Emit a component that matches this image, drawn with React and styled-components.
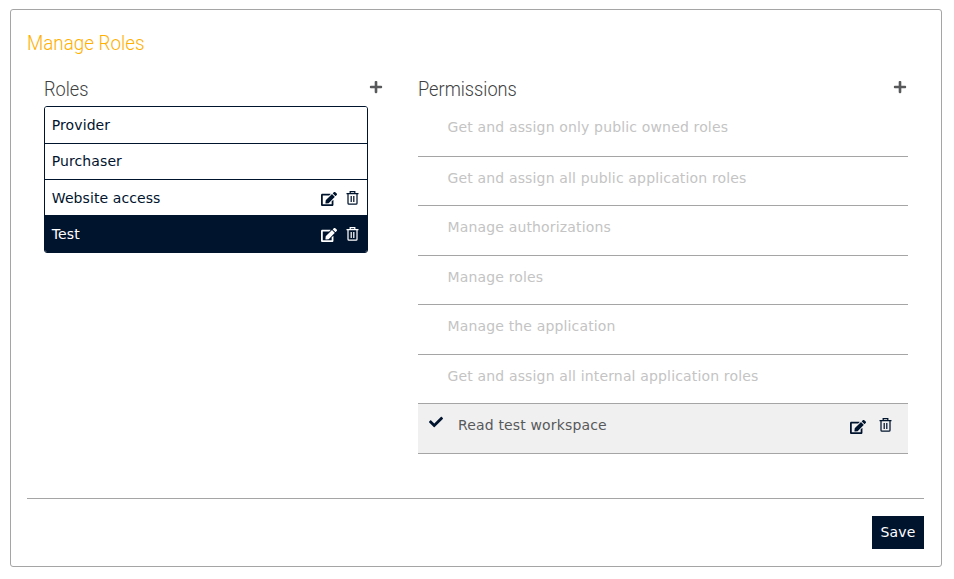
import React from "react";
import styled, { createGlobalStyle } from "styled-components";
import { FaEdit, FaPlus, FaCheck } from "react-icons/fa";

const Global = createGlobalStyle`
  * { box-sizing: border-box; }
  body { margin: 0; background: #fff; font-family: Verdana, "DejaVu Sans", sans-serif; }
  h1, h2, ul { margin: 0; padding: 0; }
  button { border: 0; margin: 0; padding: 0; background: none; color: inherit; font: inherit; line-height: 0; display: block; }
`;

const Card = styled.main`
  width: 932px;
  height: 558px;
  margin: 9px 0 0 10px;
  padding: 19px 17px 0 16px;
  border: 1px solid #a5a5a5;
  border-radius: 3px;
`;

const Title = styled.h1`
  height: 26px;
  font: 300 20px/28px Roboto, sans-serif;
  color: #ffb000;
  span { display: inline-block; transform: scaleX(0.94); transform-origin: 0 50%; }
`;

const Columns = styled.div`
  display: grid;
  grid-template-columns: 324px 490px;
  column-gap: 50px;
  padding: 20px 0 0 17px;
  height: 443px;
`;

const Heading = styled.div`
  display: flex;
  justify-content: space-between;
  height: 31px;
  h2 { font: 300 20px/28px Roboto, sans-serif; color: #3e3f41; white-space: nowrap; transform: scaleX(0.91); transform-origin: 0 50%; }
`;

const Add = styled.button`
  height: 14px;
  margin: 5px ${(p) => p.$right}px 0 0;
  color: #58595b;
`;

const RoleList = styled.ul`
  list-style: none;
  border: 1px solid #00142e;
  border-radius: 3px;
  overflow: hidden;
`;

const Role = styled.li`
  display: flex;
  align-items: center;
  justify-content: space-between;
  height: 36px;
  padding: 0 8px 0 6.8px;
  font-size: 14px;
  letter-spacing: 0.09px;
  color: ${(p) => (p.$active ? "#fff" : "#00142e")};
  background: ${(p) => (p.$active ? "#00142e" : "#fff")};
  & + & { border-top: 1px solid #00142e; }
  &:nth-child(2) { padding-bottom: 1px; }
  &:last-child { height: 37px; }
`;

const Actions = styled.div`
  display: flex;
  align-items: flex-start;
  gap: ${(p) => p.$gap}px;
  color: ${(p) => (p.$light ? "#fff" : "#00142e")};
  button { margin-top: 2px; }
  button:first-child { margin-top: ${(p) => p.$drop}px; }
`;

const Permission = styled.li`
  display: flex;
  justify-content: space-between;
  height: 49.5px;
  padding: 12px 16px 0 ${(p) => (p.$checked ? 11 : 29.5)}px;
  border-bottom: 1px solid #a5a5a5;
  background: ${(p) => (p.$checked ? "#f0f0f0" : "transparent")};
  color: ${(p) => (p.$checked ? "#58595b" : "#c4c4c4")};
  font-size: 14px;
  letter-spacing: 0.155px;
  line-height: 18px;
  list-style: none;
  &:first-child { height: 50.5px; }
`;

const Label = styled.span`
  display: flex;
  gap: 15px;
  svg { color: #00142e; margin-top: -1px; }
`;

const Footer = styled.footer`
  display: flex;
  justify-content: flex-end;
  border-top: 1px solid #a5a5a5;
  padding-top: 17px;
`;

const Save = styled.button`
  width: 52px;
  height: 33px;
  background: #00142e;
  color: #fff;
  font-size: 14px;
  letter-spacing: 0.1px;
  line-height: 33px;
`;

const TrashIcon = () => (
  <svg width="13" height="14" viewBox="0 0 13 14" fill="none" stroke="currentColor" strokeWidth="1.25">
    <path d="M.5 2.6h12M4.2 2.5V.7h4.6v1.8M2 3v9.2q0 1 1 1h7q1 0 1-1V3M5.2 5v6M7.8 5v6" />
  </svg>
);

const RowActions = ({ light, gap = 9, drop = 2 }) => (
  <Actions $light={light} $gap={gap} $drop={drop}>
    <button aria-label="Edit"><FaEdit size={16} /></button>
    <button aria-label="Delete"><TrashIcon /></button>
  </Actions>
);

const roles = [
  { name: "Provider" },
  { name: "Purchaser" },
  { name: "Website access", editable: true },
  { name: "Test", editable: true, active: true },
];

const permissions = [
  "Get and assign only public owned roles",
  "Get and assign all public application roles",
  "Manage authorizations",
  "Manage roles",
  "Manage the application",
  "Get and assign all internal application roles",
];

export default function App() {
  return (
    <>
      <Global />
      <Card>
        <Title><span>Manage Roles</span></Title>
        <Columns>
          <section>
            <Heading><h2>Roles</h2><Add $right={-15} aria-label="Add role"><FaPlus size={14} /></Add></Heading>
            <RoleList>
              {roles.map((r) => (
                <Role key={r.name} $active={r.active}>
                  {r.name}
                  {r.editable && <RowActions light={r.active} />}
                </Role>
              ))}
            </RoleList>
          </section>
          <section>
            <Heading><h2>Permissions</h2><Add $right={1.5} aria-label="Add permission"><FaPlus size={14} /></Add></Heading>
            <ul>
              {permissions.map((p) => <Permission key={p}>{p}</Permission>)}
              <Permission $checked>
                <Label><FaCheck size={14} />Read test workspace</Label>
                <RowActions gap={13} drop={3} />
              </Permission>
            </ul>
          </section>
        </Columns>
        <Footer><Save>Save</Save></Footer>
      </Card>
    </>
  );
}
